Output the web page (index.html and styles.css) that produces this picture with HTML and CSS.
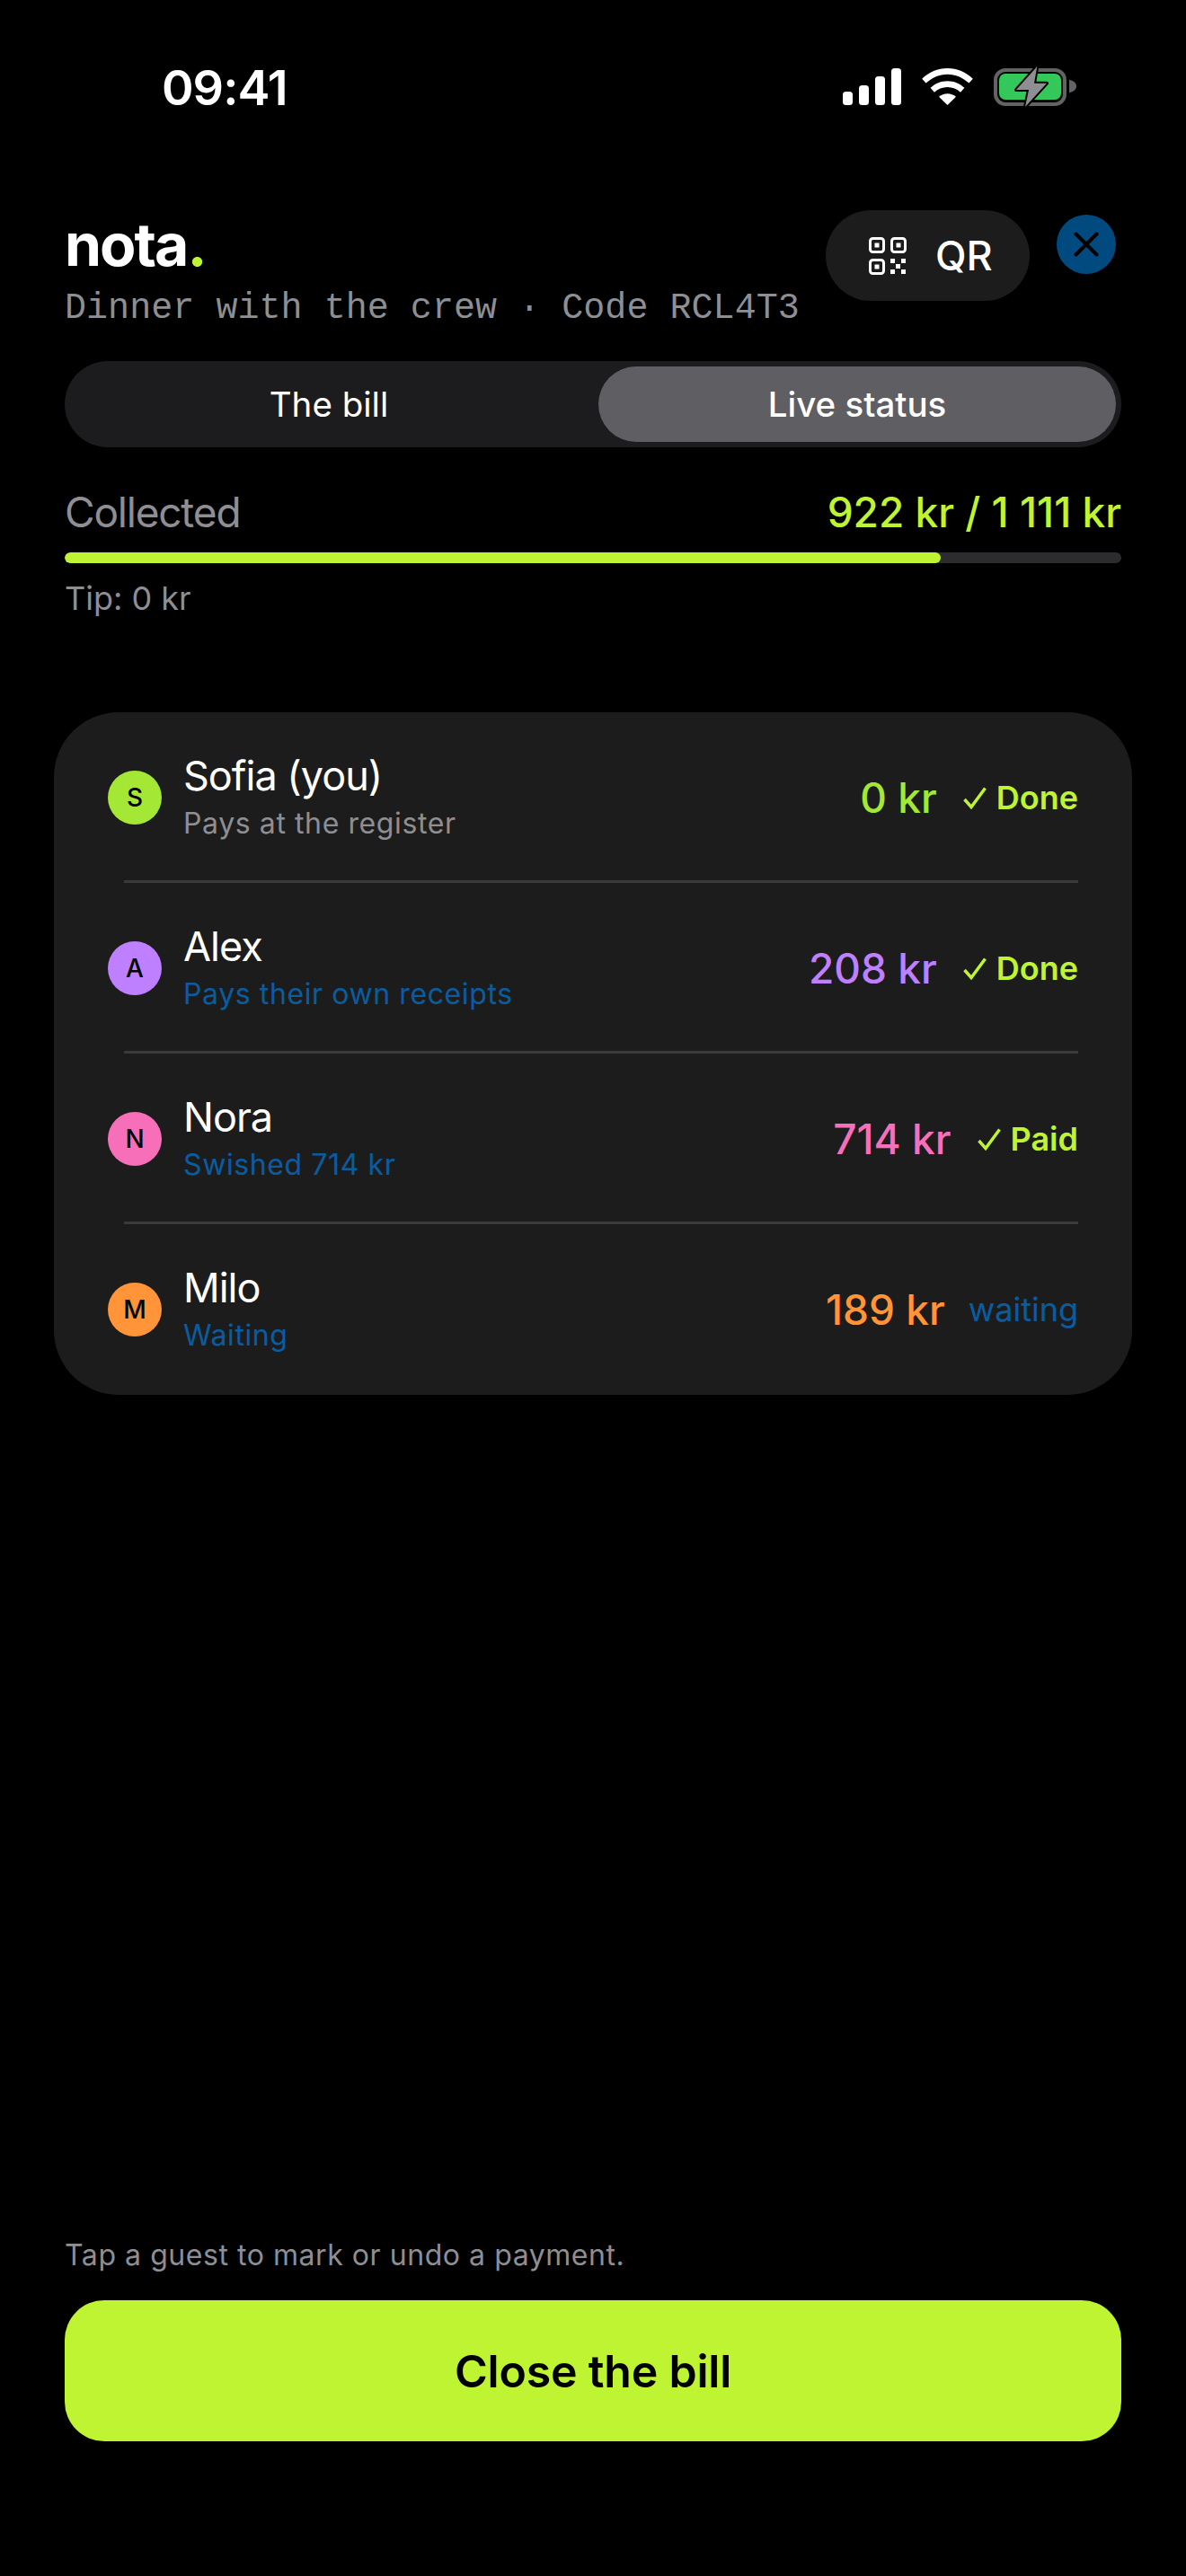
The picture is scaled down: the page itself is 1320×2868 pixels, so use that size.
FILE: index.html
```html
<!DOCTYPE html>
<html lang="en">
<head>
<meta charset="utf-8">
<title>nota</title>
<link rel="stylesheet" href="styles.css">
</head>
<body>
<main class="screen">
  <header class="status">
    <span class="clock">09:41</span>
    <div class="status-icons">
      <svg class="ic-bars" width="65" height="41" viewBox="0 0 65 41"><rect x="0" y="26" width="11" height="15" rx="3.500" fill="#fff"/><rect x="18" y="19" width="11" height="22" rx="3.500" fill="#fff"/><rect x="36" y="9" width="11" height="32" rx="3.500" fill="#fff"/><rect x="54" y="0" width="11" height="41" rx="3.500" fill="#fff"/></svg>
      <svg class="ic-bars" width="57" height="41" viewBox="0 0 58 42"><path d="M29 0C17.800 0 8 4.300 0 12l4.500 5C11.500 10.300 19.800 6.800 29 6.800S46.500 10.300 53.500 17L58 12C50 4.300 40.200 0 29 0Z" fill="#fff"/><path d="M29 14.500c-7.500 0-14 2.800-19.400 7.800l4.500 5c4-3.600 9-5.800 14.900-5.800s10.900 2.200 14.900 5.800l4.500-5C43 17.300 36.500 14.500 29 14.500Z" fill="#fff"/><path d="M29 29c-3.800 0-7 1.300-9.700 3.600L29 42l9.700-9.400C36 30.300 32.800 29 29 29Z" fill="#fff"/></svg>
      <svg width="92" height="46" viewBox="0 0 92 46"><rect x="2" y="4" width="77" height="38" rx="11" fill="none" stroke="#636366" stroke-width="4"/><rect x="6" y="8" width="69" height="29" rx="7" fill="#34c759"/><path d="M84 15c4.500.5 8 3 8 7s-3.500 6.500-8 7Z" fill="#636366"/><path d="M48.300 0 25 26h14l-4 19 24-26.300H45Z" fill="#8e8e93" stroke="#000" stroke-width="4" stroke-linejoin="round" paint-order="stroke"/></svg>
    </div>
  </header>

  <section class="top">
    <div class="brand">
      <h1 class="logo">nota<span class="logo-dot">.</span></h1>
      <p class="sub">Dinner with the crew · Code RCL4T3</p>
    </div>
    <button class="qr-btn">
      <svg width="42" height="42" viewBox="0 0 42 42" fill="none" stroke="#fff" stroke-width="3"><rect x="1.500" y="1.500" width="15" height="15" rx="3"/><rect x="25.500" y="1.500" width="15" height="15" rx="3"/><rect x="1.500" y="25.500" width="15" height="15" rx="3"/><g fill="#fff" stroke="none"><rect x="6.500" y="6.500" width="5" height="5"/><rect x="30.500" y="6.500" width="5" height="5"/><rect x="6.500" y="30.500" width="5" height="5"/><rect x="24" y="24" width="5" height="5"/><rect x="36" y="24" width="5" height="5"/><rect x="30" y="30" width="5" height="5"/><rect x="24" y="36" width="5" height="5"/><rect x="36" y="36" width="5" height="5"/></g></svg>
      <span>QR</span>
    </button>
    <button class="close-btn" aria-label="Close">
      <svg width="28" height="28" viewBox="0 0 28 28" fill="none" stroke="#000" stroke-width="4" stroke-linecap="round"><path d="M2.500 2.500 25.500 25.500M25.500 2.500 2.500 25.500"/></svg>
    </button>
  </section>

  <nav class="seg">
    <div class="seg-item">The bill</div>
    <div class="seg-item seg-on">Live status</div>
  </nav>

  <section class="progress">
    <div class="prog-head">
      <span class="prog-label">Collected</span>
      <span class="prog-val">922 kr / 1 111 kr</span>
    </div>
    <div class="track"><div class="fill" style="width:82.900%"></div></div>
    <p class="tip">Tip: 0 kr</p>
  </section>

  <section class="card">
    <div class="row">
      <div class="av av-lime">S</div>
      <div class="who"><div class="name">Sofia (you)</div><div class="note">Pays at the register</div></div>
      <div class="amt c-lime">0 kr</div>
      <div class="state"><svg class="chk" width="27" height="26" viewBox="0 0 27 26"><path d="M2.500 15 10 23.500 25.500 2.500"/></svg><span>Done</span></div>
    </div>
    <div class="row">
      <div class="av av-purple">A</div>
      <div class="who"><div class="name">Alex</div><div class="note blue">Pays their own receipts</div></div>
      <div class="amt c-purple">208 kr</div>
      <div class="state"><svg class="chk" width="27" height="26" viewBox="0 0 27 26"><path d="M2.500 15 10 23.500 25.500 2.500"/></svg><span>Done</span></div>
    </div>
    <div class="row">
      <div class="av av-pink">N</div>
      <div class="who"><div class="name">Nora</div><div class="note blue">Swished 714 kr</div></div>
      <div class="amt c-pink">714 kr</div>
      <div class="state"><svg class="chk" width="27" height="26" viewBox="0 0 27 26"><path d="M2.500 15 10 23.500 25.500 2.500"/></svg><span>Paid</span></div>
    </div>
    <div class="row">
      <div class="av av-orange">M</div>
      <div class="who"><div class="name">Milo</div><div class="note blue">Waiting</div></div>
      <div class="amt c-orange">189 kr</div>
      <div class="state waiting">waiting</div>
    </div>
  </section>

  <footer class="foot">
    <p class="hint">Tap a guest to mark or undo a payment.</p>
    <button class="cta">Close the bill</button>
  </footer>
</main>
</body>
</html>
```
FILE: styles.css
```css
* { box-sizing: border-box; margin: 0; padding: 0; }
html, body { background: #000; }
body { font-family: Inter, "Liberation Sans", sans-serif; color: #fff; }
button { font-family: inherit; border: 0; }
.screen { width: 1320px; height: 2868px; display: flex; flex-direction: column; padding: 0 72px; }

.status { height: 234px; padding: 72px 0 0 108px; display: flex; justify-content: space-between; align-items: flex-start; margin-right: 50px; }
.clock { font-size: 54px; line-height: 51px; font-weight: 600; letter-spacing: -1px; }
.status-icons { display: flex; align-items: flex-start; gap: 23px; padding-top: 2px; }
.ic-bars { margin-top: 2px; }

.top { display: flex; align-items: flex-start; height: 168px; }
.brand { flex: 1; white-space: nowrap; }
.logo { font-size: 66px; line-height: 76px; font-weight: 700; letter-spacing: -2px; }
.logo-dot { color: #bff433; }
.sub { font-family: "Liberation Mono", monospace; font-size: 40px; line-height: 46px; letter-spacing: .05px; color: #8e8e93; margin-top: 11px; }
.qr-btn { width: 227px; height: 101px; border-radius: 51px; background: #1c1c1c; color: #fff; display: flex; align-items: center; gap: 32px; padding-left: 48px; font-size: 45px; font-weight: 500; margin-left: -120px; }
.close-btn { width: 66px; height: 66px; border-radius: 50%; background: #004a80; margin: 5px 6px 0 30px; display: flex; align-items: center; justify-content: center; }

.seg { display: grid; grid-template-columns: 1fr 1fr; gap: 12px; height: 96px; padding: 6px; border-radius: 48px; background: #1c1c1e; }
.seg-item { display: flex; align-items: center; justify-content: center; font-size: 38.500px; font-weight: 400; border-radius: 42px; }
.seg-on { background: #5e5e63; font-weight: 500; }

.progress { padding-top: 47px; }
.prog-head { display: flex; justify-content: space-between; align-items: center; height: 50px; }
.prog-label { font-size: 46px; letter-spacing: -1.200px; color: #8e8e93; }
.prog-val { font-size: 46px; font-weight: 500; color: #bff433; }
.track { height: 12px; margin-top: 20px; border-radius: 6px; background: #2c2c2e; overflow: hidden; }
.fill { height: 100%; background: #bff433; border-radius: 6px; }
.tip { margin-top: 17px; font-size: 36px; line-height: 44px; color: #8e8e93; }

.card { margin: 105px -12px 0; background: #1c1c1c; border-radius: 72px; padding: 0 60px; }
.row { position: relative; height: 190px; display: flex; align-items: center; }
.row:not(:last-child)::after { content: ""; position: absolute; left: 18px; right: 0; bottom: 0; height: 3px; background: #3a3a3c; }
.av { width: 60px; height: 60px; border-radius: 50%; color: #000; font-size: 28px; font-weight: 500; display: flex; align-items: center; justify-content: center; margin-right: 24px; }
.av-lime { background: #a4e835; }
.av-purple { background: #bf80ff; }
.av-pink { background: #f76fb8; }
.av-orange { background: #ff9438; }
.who { flex: 1; }
.name { font-size: 45px; line-height: 52px; letter-spacing: -1px; }
.note { font-size: 32px; line-height: 44px; letter-spacing: .6px; color: #8e8e93; margin-top: 5px; }
.blue { color: #0a5ca0; }
.amt { font-size: 46px; font-weight: 500; margin-right: 26px; }
.c-lime { color: #a4e835; }
.c-purple { color: #bf80ff; }
.c-pink { color: #f76fb8; }
.c-orange { color: #ff9438; }
.state { display: flex; align-items: center; gap: 11px; font-size: 36px; font-weight: 600; color: #bff433; }
.chk { fill: none; stroke: #bff433; stroke-width: 3.500; margin-left: 2px; }
.waiting { font-weight: 400; color: #0a5ca0; }

.foot { margin-top: auto; padding-bottom: 150px; }
.hint { font-size: 32px; line-height: 44px; letter-spacing: .55px; color: #8e8e93; margin-bottom: 28px; }
.cta { width: 100%; height: 157px; border-radius: 44px; background: #bff433; color: #000; font-size: 50px; font-weight: 600; letter-spacing: -.2px; }
```
